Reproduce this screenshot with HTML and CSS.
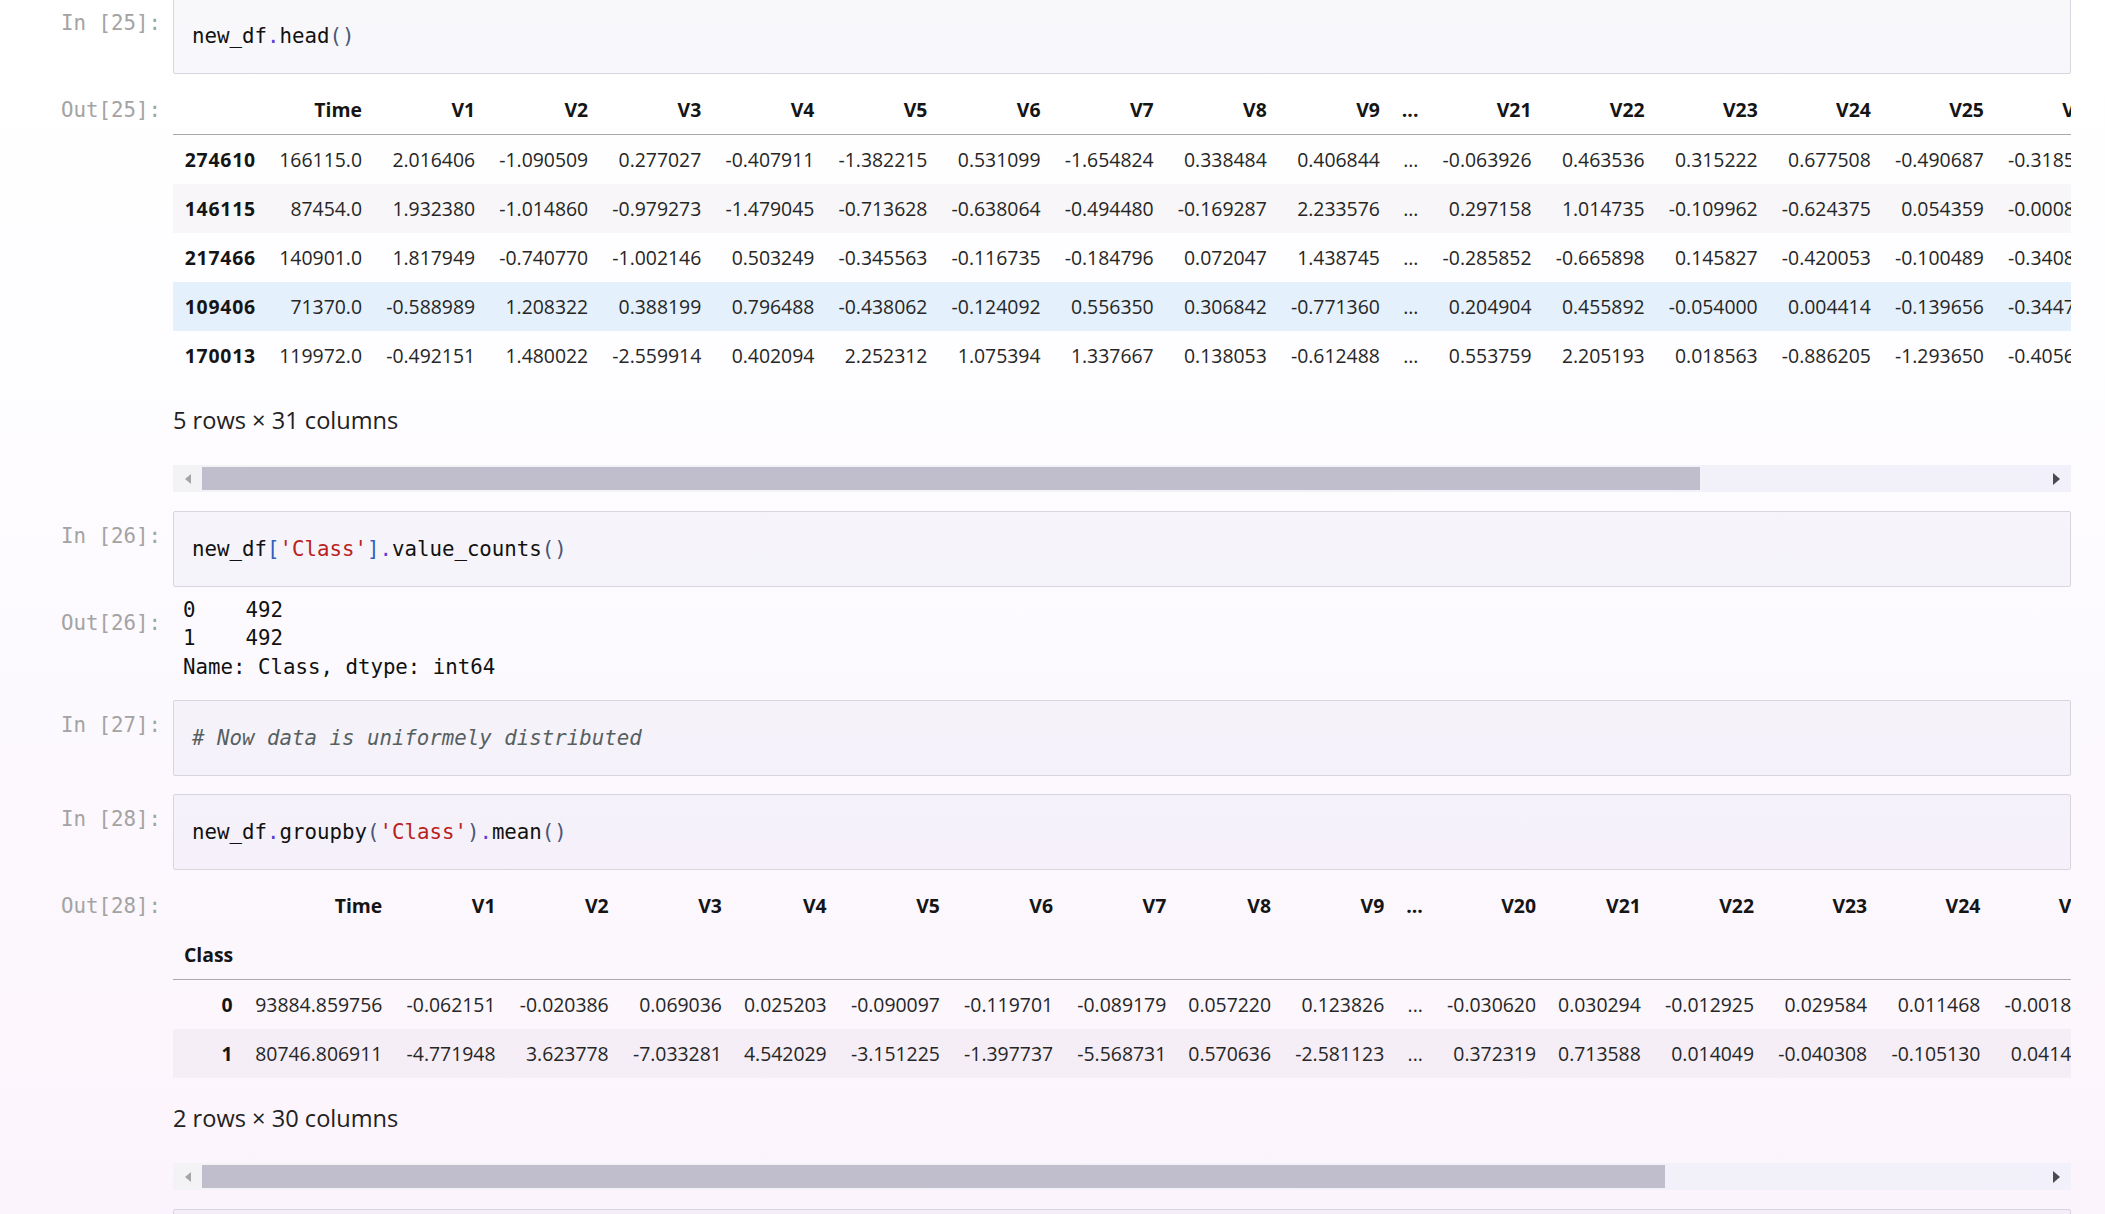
FILE: index.html
```html
<!DOCTYPE html>
<html lang="en">
<head>
<meta charset="utf-8">
<title>Notebook</title>
<link rel="stylesheet" href="styles.css">
</head>
<body>
<div class="notebook">

  <div class="cell">
    <div class="row">
      <div class="prompt">In [25]:</div>
      <div class="input">new_df<span class="op">.</span>head<span class="br">()</span></div>
    </div>
    <div class="row out-row">
      <div class="prompt">Out[25]:</div>
      <div class="out-area">
        <div class="clip">
          <table class="df">
            <thead>
              <tr>
                <th class="w-idx1"></th><th class="w-time1">Time</th>
                <th class="w-v">V1</th><th class="w-v">V2</th><th class="w-v">V3</th><th class="w-v">V4</th><th class="w-v">V5</th><th class="w-v">V6</th><th class="w-v">V7</th><th class="w-v">V8</th><th class="w-v">V9</th>
                <th class="w-ell">...</th>
                <th class="w-v">V21</th><th class="w-v">V22</th><th class="w-v">V23</th><th class="w-v">V24</th><th class="w-v">V25</th><th class="w-v">V26</th>
              </tr>
            </thead>
            <tbody>
              <tr><th>274610</th><td>166115.0</td><td>2.016406</td><td>-1.090509</td><td>0.277027</td><td>-0.407911</td><td>-1.382215</td><td>0.531099</td><td>-1.654824</td><td>0.338484</td><td>0.406844</td><td>...</td><td>-0.063926</td><td>0.463536</td><td>0.315222</td><td>0.677508</td><td>-0.490687</td><td>-0.318515</td></tr>
              <tr class="stripe"><th>146115</th><td>87454.0</td><td>1.932380</td><td>-1.014860</td><td>-0.979273</td><td>-1.479045</td><td>-0.713628</td><td>-0.638064</td><td>-0.494480</td><td>-0.169287</td><td>2.233576</td><td>...</td><td>0.297158</td><td>1.014735</td><td>-0.109962</td><td>-0.624375</td><td>0.054359</td><td>-0.000812</td></tr>
              <tr><th>217466</th><td>140901.0</td><td>1.817949</td><td>-0.740770</td><td>-1.002146</td><td>0.503249</td><td>-0.345563</td><td>-0.116735</td><td>-0.184796</td><td>0.072047</td><td>1.438745</td><td>...</td><td>-0.285852</td><td>-0.665898</td><td>0.145827</td><td>-0.420053</td><td>-0.100489</td><td>-0.340826</td></tr>
              <tr class="hover"><th>109406</th><td>71370.0</td><td>-0.588989</td><td>1.208322</td><td>0.388199</td><td>0.796488</td><td>-0.438062</td><td>-0.124092</td><td>0.556350</td><td>0.306842</td><td>-0.771360</td><td>...</td><td>0.204904</td><td>0.455892</td><td>-0.054000</td><td>0.004414</td><td>-0.139656</td><td>-0.344715</td></tr>
              <tr><th>170013</th><td>119972.0</td><td>-0.492151</td><td>1.480022</td><td>-2.559914</td><td>0.402094</td><td>2.252312</td><td>1.075394</td><td>1.337667</td><td>0.138053</td><td>-0.612488</td><td>...</td><td>0.553759</td><td>2.205193</td><td>0.018563</td><td>-0.886205</td><td>-1.293650</td><td>-0.405617</td></tr>
            </tbody>
          </table>
        </div>
        <p class="shape-note">5 rows × 31 columns</p>
        <div class="hscroll">
          <span class="sb-btn"><span class="arrow-left"></span></span>
          <div class="sb-track"><div class="sb-thumb thumb-a"></div></div>
          <span class="sb-btn"><span class="arrow-right"></span></span>
        </div>
      </div>
    </div>
  </div>

  <div class="cell">
    <div class="row">
      <div class="prompt">In [26]:</div>
      <div class="input">new_df<span class="sq">[</span><span class="str">'Class'</span><span class="sq">]</span><span class="op">.</span>value_counts<span class="br">()</span></div>
    </div>
    <div class="row out-row">
      <div class="prompt">Out[26]:</div>
      <pre class="text-out">0    492
1    492
Name: Class, dtype: int64</pre>
    </div>
  </div>

  <div class="cell">
    <div class="row">
      <div class="prompt">In [27]:</div>
      <div class="input"><span class="cm"># Now data is uniformely distributed</span></div>
    </div>
  </div>

  <div class="cell">
    <div class="row">
      <div class="prompt">In [28]:</div>
      <div class="input">new_df<span class="op">.</span>groupby<span class="br">(</span><span class="str">'Class'</span><span class="br">)</span><span class="op">.</span>mean<span class="br">()</span></div>
    </div>
    <div class="row out-row">
      <div class="prompt">Out[28]:</div>
      <div class="out-area">
        <div class="clip">
          <table class="df">
            <thead>
              <tr>
                <th class="w-idx2"></th><th class="w-time2">Time</th>
                <th class="w-vn">V1</th><th class="w-vn">V2</th><th class="w-vn">V3</th><th class="w-vp">V4</th><th class="w-vn">V5</th><th class="w-vn">V6</th><th class="w-vn">V7</th><th class="w-vp">V8</th><th class="w-vn">V9</th>
                <th class="w-ell">...</th>
                <th class="w-vn">V20</th><th class="w-vp">V21</th><th class="w-vn">V22</th><th class="w-vn">V23</th><th class="w-vn">V24</th><th class="w-vn">V25</th>
              </tr>
              <tr>
                <th class="index-name">Class</th><th></th><th></th><th></th><th></th><th></th><th></th><th></th><th></th><th></th><th></th><th></th><th></th><th></th><th></th><th></th><th></th><th></th>
              </tr>
            </thead>
            <tbody>
              <tr><th>0</th><td>93884.859756</td><td>-0.062151</td><td>-0.020386</td><td>0.069036</td><td>0.025203</td><td>-0.090097</td><td>-0.119701</td><td>-0.089179</td><td>0.057220</td><td>0.123826</td><td>...</td><td>-0.030620</td><td>0.030294</td><td>-0.012925</td><td>0.029584</td><td>0.011468</td><td>-0.001838</td></tr>
              <tr class="stripe"><th>1</th><td>80746.806911</td><td>-4.771948</td><td>3.623778</td><td>-7.033281</td><td>4.542029</td><td>-3.151225</td><td>-1.397737</td><td>-5.568731</td><td>0.570636</td><td>-2.581123</td><td>...</td><td>0.372319</td><td>0.713588</td><td>0.014049</td><td>-0.040308</td><td>-0.105130</td><td>0.041449</td></tr>
            </tbody>
          </table>
        </div>
        <p class="shape-note">2 rows × 30 columns</p>
        <div class="hscroll">
          <span class="sb-btn"><span class="arrow-left"></span></span>
          <div class="sb-track"><div class="sb-thumb thumb-b"></div></div>
          <span class="sb-btn"><span class="arrow-right"></span></span>
        </div>
      </div>
    </div>
  </div>

  <div class="cell">
    <div class="row">
      <div class="prompt">In [29]:</div>
      <div class="input"> </div>
    </div>
  </div>

</div>
</body>
</html>
```
FILE: styles.css
```css
html, body {
  margin: 0;
  padding: 0;
  height: 1214px;
  overflow: hidden;
}

body {
  background: linear-gradient(180deg, #ffffff 0%, #fefdff 30%, #fcf9fe 60%, #fcf4fc 100%);
  font-family: "Open Sans", "Noto Sans", sans-serif;
  color: #1e1e1e;
}

.notebook {
  width: 2071px;
  margin-top: -2px;
}

.cell + .cell {
  margin-top: 18.5px;
}

.row {
  display: grid;
  grid-template-columns: 173px 1898px;
}

.out-row {
  margin-top: 11px;
}

.prompt {
  font-family: "DejaVu Sans Mono", monospace;
  font-size: 20.75px;
  line-height: 26px;
  color: #a3a3a3;
  text-align: right;
  padding: 12px 12px 0 0;
  white-space: pre;
}

.input {
  border: 1px solid #d7d5e0;
  border-radius: 2px;
  background: rgba(70, 50, 150, 0.035);
  padding: 24px 18px;
  font-family: "DejaVu Sans Mono", monospace;
  font-size: 20.75px;
  line-height: 26px;
  color: #111;
  white-space: pre;
  overflow: hidden;
}

.op { color: #5b3fd9; }
.br { color: #4b5678; }
.sq { color: #2f5fbf; }
.str { color: #ba2121; }
.cm { color: #56605f; font-style: italic; }

.text-out {
  margin: -2px 0 0 0;
  padding-left: 10px;
  font-family: "DejaVu Sans Mono", monospace;
  font-size: 20.75px;
  line-height: 28.5px;
  color: #111;
}

.out-area {
  min-width: 0;
}

.clip {
  overflow: hidden;
  width: 1898px;
}

.df {
  border-collapse: collapse;
  border: none;
  width: max-content;
  font-size: 19.4px;
  line-height: 25px;
  color: #262626;
}

.df th,
.df td {
  padding: 12px 11px;
  text-align: right;
  white-space: nowrap;
  vertical-align: middle;
}

.df th {
  font-weight: 700;
  color: #151515;
}

.df tbody th {
  letter-spacing: 0.8px;
}

.df thead tr:last-child th {
  border-bottom: 1px solid #a9a9ad;
}

.df .index-name {
  text-align: left;
}

.df tbody tr.stripe {
  background: rgba(60, 20, 60, 0.035);
}

.df tbody tr.hover {
  background: #e4f0fb;
}

.w-idx1 { width: 72px; }
.w-time1 { width: 84px; }
.w-v { width: 91.1px; }
.w-ell { width: 16.6px; }
.w-idx2 { width: 49px; }
.w-time2 { width: 127px; }
.w-vn { width: 91.2px; }
.w-vp { width: 82.8px; }

.shape-note {
  margin: 24.5px 0 0 0;
  font-size: 23.6px;
  line-height: 31px;
  color: #222;
}

.hscroll {
  margin-top: 29.5px;
  height: 27px;
  display: flex;
  background: linear-gradient(90deg, #f3f3f5 0%, #f2f0fa 100%);
}

.sb-btn {
  width: 29px;
  flex: none;
  display: flex;
  align-items: center;
  justify-content: center;
}

.arrow-left {
  width: 0;
  height: 0;
  border-top: 5px solid transparent;
  border-bottom: 5px solid transparent;
  border-right: 6px solid #a5a5a8;
}

.arrow-right {
  width: 0;
  height: 0;
  border-top: 6px solid transparent;
  border-bottom: 6px solid transparent;
  border-left: 7px solid #4a4a52;
}

.sb-track {
  flex: 1;
  padding: 2px 0;
}

.sb-thumb {
  height: 23px;
  background: #c0bdcd;
}

.thumb-a { width: 1498px; }
.thumb-b { width: 1463px; }
```
